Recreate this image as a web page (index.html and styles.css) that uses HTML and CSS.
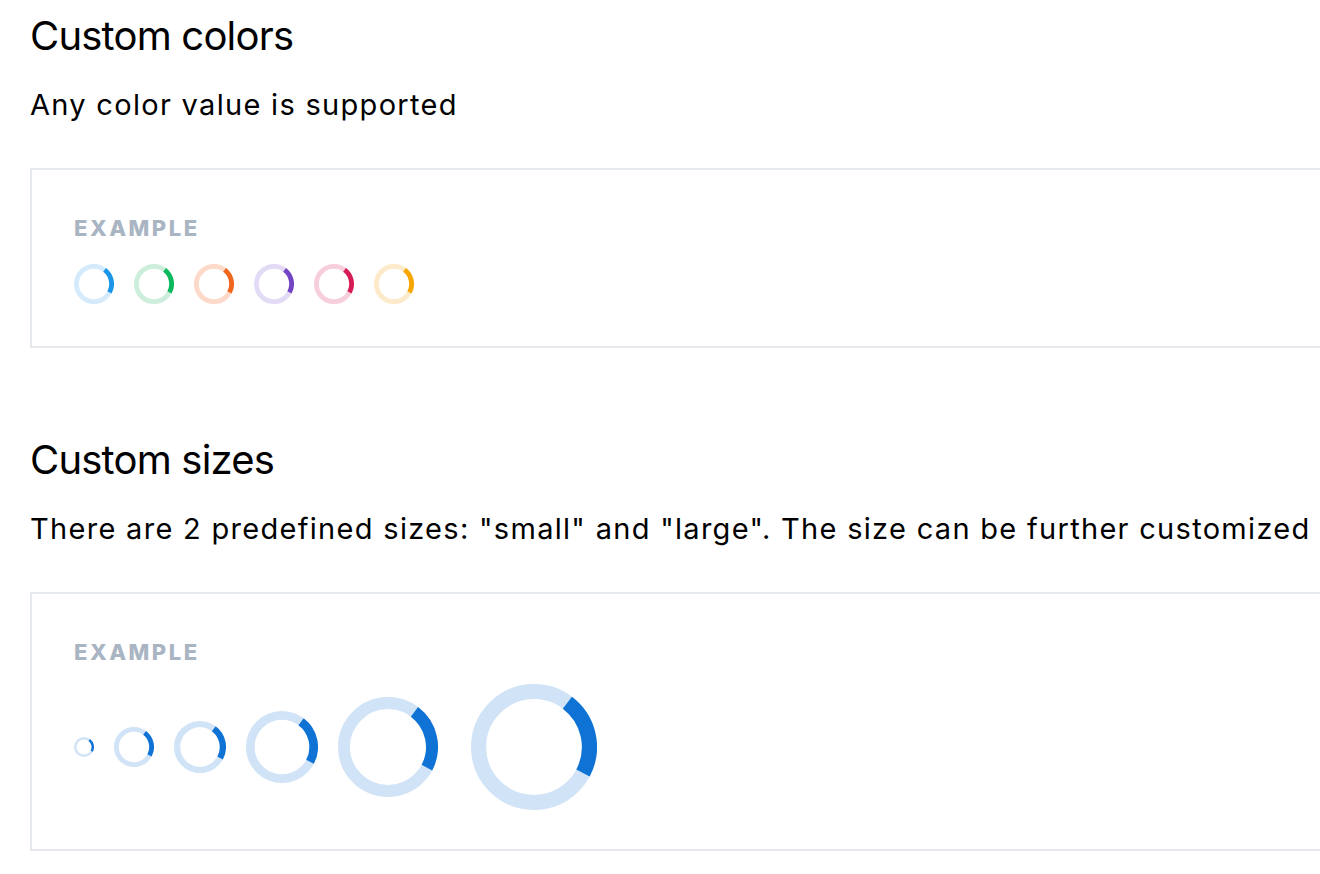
FILE: index.html
```html
<!DOCTYPE html>
<html lang="en">
<head>
    <meta charset="UTF-8">
    <title>Spinner</title>
    <link rel="stylesheet" href="styles.css">
</head>
<body>
    <div class="page">
        <section class="doc-section">
            <h2>Custom colors</h2>
            <p>Any color value is supported</p>
            <div class="example">
                <div class="example-label">Example</div>
                <div class="example-row">
                    <svg class="spinner spinner--blue" viewBox="0 0 100 100"><circle class="spinner-track" cx="50" cy="50" r="44"/><circle class="spinner-arc" cx="50" cy="50" r="44" transform="rotate(-53 50 50)"/></svg>
                    <svg class="spinner spinner--green" viewBox="0 0 100 100"><circle class="spinner-track" cx="50" cy="50" r="44"/><circle class="spinner-arc" cx="50" cy="50" r="44" transform="rotate(-53 50 50)"/></svg>
                    <svg class="spinner spinner--orange" viewBox="0 0 100 100"><circle class="spinner-track" cx="50" cy="50" r="44"/><circle class="spinner-arc" cx="50" cy="50" r="44" transform="rotate(-53 50 50)"/></svg>
                    <svg class="spinner spinner--purple" viewBox="0 0 100 100"><circle class="spinner-track" cx="50" cy="50" r="44"/><circle class="spinner-arc" cx="50" cy="50" r="44" transform="rotate(-53 50 50)"/></svg>
                    <svg class="spinner spinner--pink" viewBox="0 0 100 100"><circle class="spinner-track" cx="50" cy="50" r="44"/><circle class="spinner-arc" cx="50" cy="50" r="44" transform="rotate(-53 50 50)"/></svg>
                    <svg class="spinner spinner--yellow" viewBox="0 0 100 100"><circle class="spinner-track" cx="50" cy="50" r="44"/><circle class="spinner-arc" cx="50" cy="50" r="44" transform="rotate(-53 50 50)"/></svg>
                </div>
            </div>
        </section>

        <section class="doc-section">
            <h2>Custom sizes</h2>
            <p>There are 2 predefined sizes: "small" and "large". The size can be further customized</p>
            <div class="example example--sizes">
                <div class="example-label">Example</div>
                <div class="example-row">
                    <svg class="spinner spinner--dark spinner--small" viewBox="0 0 100 100"><circle class="spinner-track" cx="50" cy="50" r="44"/><circle class="spinner-arc" cx="50" cy="50" r="44" transform="rotate(-53 50 50)"/></svg>
                    <svg class="spinner spinner--dark" viewBox="0 0 100 100"><circle class="spinner-track" cx="50" cy="50" r="44"/><circle class="spinner-arc" cx="50" cy="50" r="44" transform="rotate(-53 50 50)"/></svg>
                    <svg class="spinner spinner--dark spinner--52" viewBox="0 0 100 100"><circle class="spinner-track" cx="50" cy="50" r="44"/><circle class="spinner-arc" cx="50" cy="50" r="44" transform="rotate(-53 50 50)"/></svg>
                    <svg class="spinner spinner--dark spinner--72" viewBox="0 0 100 100"><circle class="spinner-track" cx="50" cy="50" r="44"/><circle class="spinner-arc" cx="50" cy="50" r="44" transform="rotate(-53 50 50)"/></svg>
                    <svg class="spinner spinner--dark spinner--large" viewBox="0 0 100 100"><circle class="spinner-track" cx="50" cy="50" r="44"/><circle class="spinner-arc" cx="50" cy="50" r="44" transform="rotate(-53 50 50)"/></svg>
                    <svg class="spinner spinner--dark spinner--126" viewBox="0 0 100 100"><circle class="spinner-track" cx="50" cy="50" r="44"/><circle class="spinner-arc" cx="50" cy="50" r="44" transform="rotate(-53 50 50)"/></svg>
                </div>
            </div>
        </section>
    </div>
</body>
</html>
```

FILE: styles.css
```css
html {
    overflow: hidden;
}
body {
    margin: 0;
    background: #fff;
    color: #000;
    font-family: Inter, "Noto Sans", sans-serif;
}
.page {
    width: 1700px;
    padding: 12px 0 0 30px;
}
/* Abschnitt: Titel, Text, Beispielbox */
.doc-section {
    margin-bottom: 88px;
}
.doc-section h2 {
    margin: 0;
    font-size: 40px;
    font-weight: 400;
    line-height: 48px;
    letter-spacing: -0.8px;
}
.doc-section p {
    margin: 25px 0 43px;
    font-size: 29px;
    line-height: 40px;
    letter-spacing: 1.3px;
    white-space: nowrap;
}
.example {
    border: 2px solid #e5e9ed;
    padding: 44px 42px 38px;
}
.example--sizes {
    padding-bottom: 39px;
}
.example-label {
    font-size: 22px;
    font-weight: 800;
    line-height: 28px;
    letter-spacing: 2.5px;
    text-transform: uppercase;
    color: #a9b5c2;
    margin-bottom: 18px;
}
.example-row {
    display: flex;
    align-items: center;
    gap: 20px;
    min-height: 48px;
}
/* Spinner */
.spinner {
    width: 40px;
    height: 40px;
    flex: none;
}
.spinner-track,
.spinner-arc {
    fill: none;
    stroke-width: 12;
}
.spinner-track {
    stroke: var(--track);
}
.spinner-arc {
    stroke: var(--arc);
    stroke-dasharray: 62 300;
}
.spinner--blue   { --track: #d5ebfc; --arc: #1a95e8; }
.spinner--green  { --track: #cdeedc; --arc: #0bb85b; }
.spinner--orange { --track: #fdd9c9; --arc: #ef661c; }
.spinner--purple { --track: #e3dbf5; --arc: #7345c4; }
.spinner--pink   { --track: #f7cfdc; --arc: #d71b55; }
.spinner--yellow { --track: #fdeaca; --arc: #f7a600; }
.spinner--dark   { --track: #d1e3f6; --arc: #0f72d5; }
.spinner--small { width: 20px; height: 20px; }
.spinner--52 { width: 52px; height: 52px; }
.spinner--72 { width: 72px; height: 72px; }
.spinner--large { width: 100px; height: 100px; }
.spinner--126 { width: 126px; height: 126px; margin-left: 13px; }
```
